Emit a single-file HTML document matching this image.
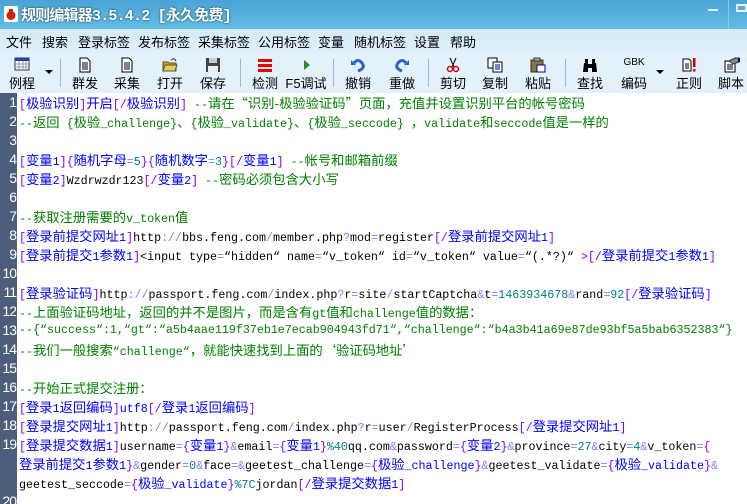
<!DOCTYPE html>
<html><head><meta charset="utf-8"><style>
*{margin:0;padding:0;box-sizing:border-box}
html,body{width:747px;height:504px;overflow:hidden}
body{background:#fff;font-family:"Liberation Sans","Noto Sans CJK SC",sans-serif;position:relative}
#title{position:absolute;left:0;top:0;width:747px;height:29px;background:linear-gradient(#4aa3d6,#59b3e0 60%,#64bde6);overflow:hidden}
#title .t{position:absolute;left:21px;top:4px;color:#fff;font-weight:bold;font-size:15px;text-shadow:0 0 2px #134;font-family:"Liberation Mono","Noto Sans CJK SC",monospace;letter-spacing:-0.8px}
#menu{position:absolute;left:0;top:29px;width:747px;height:24px;background:linear-gradient(#d4eaf7,#dff0fa)}
#menu span{position:absolute;top:3px;font-size:13px;color:#000}
#tb{position:absolute;left:0;top:53px;width:747px;height:40px;background:#e3f1fa}
.it{position:absolute;top:0;width:44px;text-align:center}
.it .lb{position:absolute;top:20px;left:0;width:44px;font-size:13px;text-align:center}
.it svg{position:absolute;top:4px;left:14px}
.sep{position:absolute;top:6px;width:1px;height:28px;background:#9bbbd3}
.dd{position:absolute;top:17px;width:0;height:0;border-left:4px solid transparent;border-right:4px solid transparent;border-top:4px solid #000}
#gut{position:absolute;left:0;top:93px;width:17px;height:411px;background:#4d5e7d;overflow:hidden}
#gut div{height:19px;line-height:19px;color:#fff;font-family:"Liberation Sans Narrow","Liberation Sans",sans-serif;font-size:14px;text-align:right;padding-right:1px;letter-spacing:-1px}
#ed{position:absolute;left:19px;top:93px;font-family:"Liberation Mono",monospace;font-size:11.67px;color:#000}
#ed div{height:19px;line-height:19px;white-space:pre;overflow:visible}
i{font-style:normal;font-family:"Noto Sans CJK SC","WenQuanYi Zen Hei",sans-serif;font-size:13.3px;line-height:19px}
.p{color:#8000ff}.b{color:#0000ff}.g{color:#008000}.t{color:#008080}.o{color:#8080ff}
</style></head><body>
<div id="title">
<svg style="position:absolute;left:4px;top:6px" width="14" height="16"><rect width="14" height="16" rx="2" fill="#fff"/><circle cx="7" cy="9.5" r="4.5" fill="#d02010"/><rect x="5" y="3" width="4" height="3" fill="#d02010"/></svg>
<div class="t">规则编辑器3.5.4.2 [永久免费]</div>
<div style="position:absolute;left:708px;top:9px;width:10px;height:2px;background:#e8f4fb"></div>
<div style="position:absolute;left:728px;top:0;width:1px;height:29px;background:#8cc8e6"></div>
<div style="position:absolute;left:736px;top:4px;width:11px;height:8px;border:2px solid #e8f4fb"></div>
</div>
<div id="menu">
<span style="left:6px">文件</span><span style="left:42px">搜索</span><span style="left:78px">登录标签</span><span style="left:138px">发布标签</span><span style="left:198px">采集标签</span><span style="left:258px">公用标签</span><span style="left:318px">变量</span><span style="left:354px">随机标签</span><span style="left:414px">设置</span><span style="left:450px">帮助</span>
</div>
<div id="tb">
<div class="it" style="left:0"><svg width="16" height="14"><rect x="1" y="1" width="14" height="12" fill="#fff" stroke="#335"/><rect x="1" y="1" width="14" height="3" fill="#2244aa"/><path d="M1 7h14M1 10h14M5 4v9M9 4v9M12 4v9" stroke="#99a" stroke-width="1"/></svg><div class="lb">例程</div></div>
<div class="dd" style="left:45px"></div>
<div class="sep" style="left:60px"></div>
<div class="it" style="left:63px"><svg width="16" height="16"><path d="M3 1h7l3 3v11H3z" fill="#fff" stroke="#000"/><path d="M5 6h6M5 8h6M5 10h6M5 12h6" stroke="#000"/></svg><div class="lb">群发</div></div>
<div class="it" style="left:105px"><svg width="16" height="16"><path d="M3 1h7l3 3v11H3z" fill="#fff" stroke="#000"/><path d="M5 6h6M5 8h6M5 10h6M5 12h6" stroke="#000"/></svg><div class="lb">采集</div></div>
<div class="it" style="left:148px"><svg width="16" height="16"><path d="M1 5h5l1 1h7v8H1z" fill="#c9a41c" stroke="#554"/><path d="M3 8h12l-2 6H1z" fill="#e8cc50" stroke="#554"/><path d="M9 3q3-3 5 1" stroke="#333" fill="none"/></svg><div class="lb">打开</div></div>
<div class="it" style="left:191px"><svg width="16" height="16"><rect x="1" y="1" width="14" height="14" fill="#444"/><rect x="4" y="1" width="8" height="5" fill="#ccc"/><rect x="3" y="9" width="10" height="6" fill="#eee"/></svg><div class="lb">保存</div></div>
<div class="sep" style="left:240px"></div>
<div class="it" style="left:243px"><svg width="16" height="16"><rect x="1" y="2" width="14" height="3" fill="#e00"/><rect x="1" y="7" width="14" height="3" fill="#e00"/><rect x="1" y="12" width="14" height="3" fill="#e00"/></svg><div class="lb">检测</div></div>
<div class="it" style="left:284px"><svg width="16" height="16"><path d="M6 3l6 5-6 5z" fill="#2a8a2a"/></svg><div class="lb">F5调试</div></div>
<div class="sep" style="left:333px"></div>
<div class="it" style="left:336px"><svg width="16" height="16"><path d="M4 6q4-5 8 0t-4 8" stroke="#2b64c4" stroke-width="3" fill="none"/><path d="M1 3l5 5H1z" fill="#2b64c4"/></svg><div class="lb">撤销</div></div>
<div class="it" style="left:380px"><svg width="16" height="16"><path d="M12 6q-4-5-8 0t4 8" stroke="#2b64c4" stroke-width="3" fill="none"/><path d="M15 3l-5 5h5z" fill="#2b64c4"/></svg><div class="lb">重做</div></div>
<div class="sep" style="left:428px"></div>
<div class="it" style="left:431px"><svg width="16" height="16"><path d="M5 1l4 9M11 1l-4 9" stroke="#000"/><circle cx="5" cy="12" r="2.5" fill="none" stroke="#d00" stroke-width="1.5"/><circle cx="11" cy="12" r="2.5" fill="none" stroke="#d00" stroke-width="1.5"/></svg><div class="lb">剪切</div></div>
<div class="it" style="left:473px"><svg width="16" height="16"><rect x="1" y="1" width="9" height="10" fill="#fff" stroke="#000"/><rect x="6" y="5" width="9" height="10" fill="#fff" stroke="#003"/><path d="M8 8h5M8 10h5M8 12h5" stroke="#00a"/></svg><div class="lb">复制</div></div>
<div class="it" style="left:516px"><svg width="16" height="16"><rect x="1" y="3" width="12" height="12" fill="#8a7a3a" stroke="#332"/><rect x="4" y="1" width="6" height="3" fill="#aaa" stroke="#333"/><rect x="7" y="8" width="8" height="7" fill="#fff" stroke="#00a"/></svg><div class="lb">粘贴</div></div>
<div class="sep" style="left:565px"></div>
<div class="it" style="left:568px"><svg width="16" height="16"><path d="M2 6h4v9H1zM10 6h4l1 9h-5z" fill="#000"/><rect x="6" y="7" width="4" height="4" fill="#000"/><rect x="3" y="2" width="3" height="4" fill="#000"/><rect x="10" y="2" width="3" height="4" fill="#000"/></svg><div class="lb">查找</div></div>
<div class="it" style="left:612px"><div style="position:absolute;top:4px;width:44px;text-align:center;font-size:10px;font-family:'Liberation Sans',sans-serif">GBK</div><div class="lb">编码</div></div>
<div class="dd" style="left:656px"></div>
<div class="it" style="left:667px"><svg width="16" height="16"><path d="M2 2h6l2 2v10H2z" fill="#fff" stroke="#000"/><path d="M4 7h4M4 9h4M4 11h4" stroke="#000"/><rect x="12" y="1" width="2.5" height="9" fill="#c00"/><rect x="12" y="12" width="2.5" height="2.5" fill="#c00"/></svg><div class="lb">正则</div></div>
<div class="it" style="left:709px"><svg width="18" height="16"><path d="M2 4h10v11H2z" fill="#fff" stroke="#000"/><path d="M4 8h6M4 10h6M4 12h6" stroke="#000"/><path d="M6 4l6-3h4v4l-6 2z" fill="#888" stroke="#333"/><rect x="15" y="1" width="2" height="4" fill="#00a"/></svg><div class="lb">脚本</div></div>
</div>
<div id="gut"><div>1</div><div>2</div><div>3</div><div>4</div><div>5</div><div>6</div><div>7</div><div>8</div><div>9</div><div>10</div><div>11</div><div>12</div><div>13</div><div>14</div><div>15</div><div>16</div><div>17</div><div>18</div><div>19</div><div></div><div></div><div>20</div></div>
<div id="ed"><div><span class="p">[</span><span class="b"><i>极验识别</i></span><span class="p">]</span><span class="b"><i>开启</i></span><span class="p">[/</span><span class="b"><i>极验识别</i></span><span class="p">]</span> <span class="g">--<i>请在“识别-极验验证码”页面，充值并设置识别平台的帐号密码</i></span></div><div class="g">--<i>返回</i> {<i>极验</i>_challenge}<i>、</i>{<i>极验</i>_validate}<i>、</i>{<i>极验</i>_seccode} <i>，</i>validate<i>和</i>seccode<i>值是一样的</i></div><div></div><div><span class="p">[</span><span class="b"><i>变量</i>1</span><span class="p">]{</span><span class="b"><i>随机字母</i></span><span class="o">=</span><span class="t">5</span><span class="p">}{</span><span class="b"><i>随机数字</i></span><span class="o">=</span><span class="t">3</span><span class="p">}[/</span><span class="b"><i>变量</i>1</span><span class="p">]</span> <span class="g">--<i>帐号和邮箱前缀</i></span></div><div><span class="p">[</span><span class="b"><i>变量</i>2</span><span class="p">]</span>Wzdrwzdr123<span class="p">[/</span><span class="b"><i>变量</i>2</span><span class="p">]</span> <span class="g">--<i>密码必须包含大小写</i></span></div><div></div><div class="g">--<i>获取注册需要的</i>v_token<i>值</i></div><div><span class="p">[</span><span class="b"><i>登录前提交网址</i>1</span><span class="p">]</span>http<span class="o">://</span>bbs.feng.com<span class="o">/</span>member.php<span class="o">?</span>mod<span class="o">=</span>register<span class="p">[/</span><span class="b"><i>登录前提交网址</i>1</span><span class="p">]</span></div><div><span class="p">[</span><span class="b"><i>登录前提交</i>1<i>参数</i>1</span><span class="p">]</span>&lt;input type<span class="o">=</span>“hidden“ name<span class="o">=</span>“v_token“ id<span class="o">=</span>“v_token“ value<span class="o">=</span>“(.*?)“ <span class="p">&gt;[/</span><span class="b"><i>登录前提交</i>1<i>参数</i>1</span><span class="p">]</span></div><div></div><div><span class="p">[</span><span class="b"><i>登录验证码</i></span><span class="p">]</span>http<span class="o">://</span>passport.feng.com<span class="o">/</span>index.php<span class="o">?</span>r<span class="o">=</span>site<span class="o">/</span>startCaptcha<span class="o">&amp;</span>t<span class="o">=</span><span class="t">1463934678</span><span class="o">&amp;</span>rand<span class="o">=</span><span class="t">92</span><span class="p">[/</span><span class="b"><i>登录验证码</i></span><span class="p">]</span></div><div class="g">--<i>上面验证码地址，返回的并不是图片，而是含有</i>gt<i>值和</i>challenge<i>值的数据：</i></div><div class="g">--{“success“:1,“gt“:“a5b4aae119f37eb1e7ecab904943fd71“,“challenge“:“b4a3b41a69e87de93bf5a5bab6352383“}</div><div class="g">--<i>我们一般搜索</i>“challenge“<i>，就能快速找到上面的‘验证码地址’</i></div><div></div><div class="g">--<i>开始正式提交注册：</i></div><div><span class="p">[</span><span class="b"><i>登录</i>1<i>返回编码</i></span><span class="p">]</span><span class="b">utf8</span><span class="p">[/</span><span class="b"><i>登录</i>1<i>返回编码</i></span><span class="p">]</span></div><div><span class="p">[</span><span class="b"><i>登录提交网址</i>1</span><span class="p">]</span>http<span class="o">://</span>passport.feng.com<span class="o">/</span>index.php<span class="o">?</span>r<span class="o">=</span>user<span class="o">/</span>RegisterProcess<span class="p">[/</span><span class="b"><i>登录提交网址</i>1</span><span class="p">]</span></div><div><span class="p">[</span><span class="b"><i>登录提交数据</i>1</span><span class="p">]</span>username<span class="o">=</span><span class="p">{</span><span class="b"><i>变量</i>1</span><span class="p">}</span><span class="o">&amp;</span>email<span class="o">=</span><span class="p">{</span><span class="b"><i>变量</i>1</span><span class="p">}</span><span class="t">%40</span>qq.com<span class="o">&amp;</span>password<span class="o">=</span><span class="p">{</span><span class="b"><i>变量</i>2</span><span class="p">}</span><span class="o">&amp;</span>province<span class="o">=</span><span class="t">27</span><span class="o">&amp;</span>city<span class="o">=</span><span class="t">4</span><span class="o">&amp;</span>v_token<span class="o">=</span><span class="p">{</span></div><div><span class="b"><i>登录前提交</i>1<i>参数</i>1</span><span class="p">}</span><span class="o">&amp;</span>gender<span class="o">=</span><span class="t">0</span><span class="o">&amp;</span>face<span class="o">=&amp;</span>geetest_challenge<span class="o">=</span><span class="p">{</span><span class="b"><i>极验</i>_challenge</span><span class="p">}</span><span class="o">&amp;</span>geetest_validate<span class="o">=</span><span class="p">{</span><span class="b"><i>极验</i>_validate</span><span class="p">}</span><span class="o">&amp;</span></div><div>geetest_seccode<span class="o">=</span><span class="p">{</span><span class="b"><i>极验</i>_validate</span><span class="p">}</span><span class="t">%7C</span>jordan<span class="p">[/</span><span class="b"><i>登录提交数据</i>1</span><span class="p">]</span></div></div>
</body></html>
